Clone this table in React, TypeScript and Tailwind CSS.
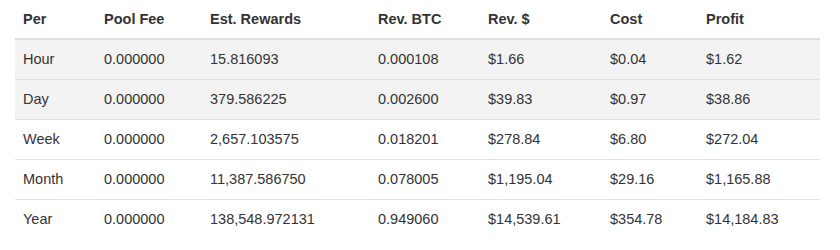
const rows = [
  ['Hour', '0.000000', '15.816093', '0.000108', '$1.66', '$0.04', '$1.62'],
  ['Day', '0.000000', '379.586225', '0.002600', '$39.83', '$0.97', '$38.86'],
  ['Week', '0.000000', '2,657.103575', '0.018201', '$278.84', '$6.80', '$272.04'],
  ['Month', '0.000000', '11,387.586750', '0.078005', '$1,195.04', '$29.16', '$1,165.88'],
  ['Year', '0.000000', '138,548.972131', '0.949060', '$14,539.61', '$354.78', '$14,184.83'],
];

const headers = ['Per', 'Pool Fee', 'Est. Rewards', 'Rev. BTC', 'Rev. $', 'Cost', 'Profit'];

const cols = 'grid grid-cols-[81px_106px_168px_110px_122px_96px_122px]';

export default function App() {
  return (
    <div className="w-[840px] h-[250px] bg-white pl-[15px] font-['Liberation_Sans',Arial,sans-serif] text-[14.5px] text-[#333]">
      <div className="w-[805px]">
        {/* header */}
        <div className={`${cols} h-[40px] pt-[2px] items-center border-b-2 border-[#dedede] font-bold`}>
          {headers.map((h) => (
            <div key={h} className="px-2">{h}</div>
          ))}
        </div>

        {rows.map((r, i) => (
          <div
            key={r[0]}
            className={`${cols} h-[40px] items-center ${i < 2 ? 'bg-[#f3f3f3]' : 'bg-white'} ${
              i < rows.length - 1 ? 'border-b border-[#e0e0e0]' : ''
            }`}
          >
            {r.map((c, j) => (
              <div key={j} className="px-2">{c}</div>
            ))}
          </div>
        ))}
      </div>
    </div>
  );
}
